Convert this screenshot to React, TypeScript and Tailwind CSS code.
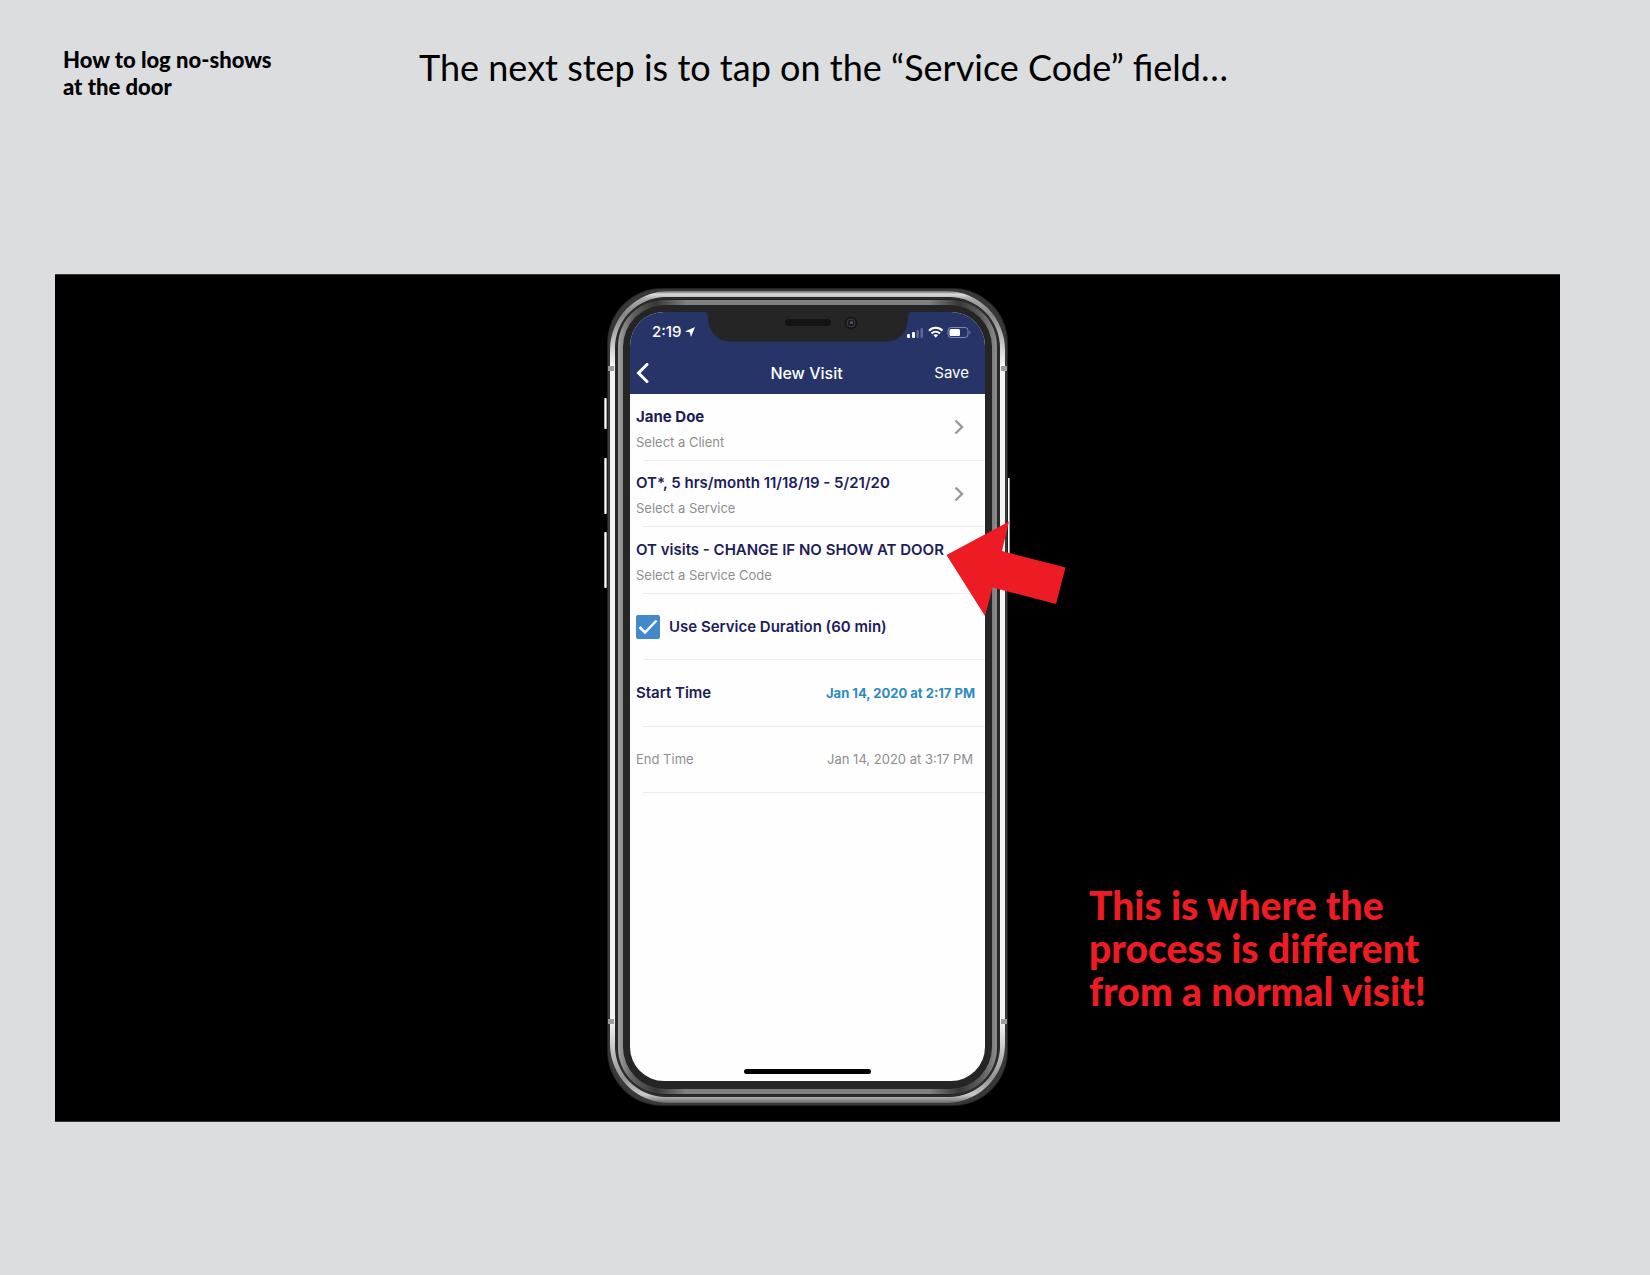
import type { ReactNode } from 'react';

const PhoneFrame = () => (
  <svg className="absolute inset-0 h-full w-full overflow-visible" viewBox="0 0 401 818" preserveAspectRatio="none" aria-hidden="true">
    <defs>
      <linearGradient id="steel" x1="0" y1="0" x2="0" y2="1">
        <stop offset="0" stopColor="#6a6a6a" />
        <stop offset="0.004" stopColor="#dcdcdc" />
        <stop offset="0.01" stopColor="#a8a8a8" />
        <stop offset="0.03" stopColor="#888888" />
        <stop offset="0.09" stopColor="#f4f4f4" />
        <stop offset="0.9" stopColor="#f4f4f4" />
        <stop offset="0.97" stopColor="#949494" />
        <stop offset="0.99" stopColor="#c8c8c8" />
        <stop offset="1" stopColor="#6a6a6a" />
      </linearGradient>
      <linearGradient id="button" x1="0" y1="0" x2="1" y2="0">
        <stop offset="0" stopColor="#8a8a8a" />
        <stop offset="0.5" stopColor="#ffffff" />
        <stop offset="1" stopColor="#777777" />
      </linearGradient>
      <linearGradient id="rim" x1="0" y1="0" x2="1" y2="0">
        <stop offset="0" stopColor="#a0a0a0" />
        <stop offset="0.04" stopColor="#606060" />
        <stop offset="0.1" stopColor="#383838" />
        <stop offset="0.18" stopColor="#808080" />
        <stop offset="0.82" stopColor="#808080" />
        <stop offset="0.9" stopColor="#383838" />
        <stop offset="0.96" stopColor="#606060" />
        <stop offset="1" stopColor="#8c8c8c" />
      </linearGradient>
    </defs>
    <rect x="-3" y="110" width="3" height="31" rx="1" fill="url(#button)" />
    <rect x="-3" y="170" width="3" height="56" rx="1" fill="url(#button)" />
    <rect x="-3" y="244" width="3" height="56" rx="1" fill="url(#button)" />
    <rect x="400" y="190" width="3" height="90" rx="1" fill="url(#button)" />
    <rect x="0" y="0" width="401" height="818" rx="55" fill="#202020" />
    <rect x="1" y="1" width="399" height="816" rx="54" fill="#383838" />
    <rect x="3" y="3" width="395" height="812" rx="59" fill="url(#steel)" />
    <rect x="8" y="9" width="385" height="800" rx="51" fill="#242424" />
    <rect x="9" y="10" width="383" height="798" rx="50" fill="none" stroke="#303030" strokeWidth="1" />
    <rect x="11" y="12" width="379" height="794" rx="46" fill="url(#rim)" />
    <rect x="16" y="17" width="369" height="784" rx="42" fill="#252525" />
    <g fill="#9aa09d">
      <rect x="1" y="78" width="6" height="5" />
      <rect x="394" y="78" width="6" height="5" />
      <rect x="1" y="731" width="6" height="5" />
      <rect x="394" y="731" width="6" height="5" />
    </g>
  </svg>
);

const Notch = () => (
  <svg className="absolute left-1/2 top-0 -translate-x-1/2" width="206" height="30" viewBox="0 0 206 30" aria-hidden="true">
    <path d="M0 0H206C204 0 203 1.500 203 5V8C202 20 194 29.500 182 29.500H25C13 29.500 4 20 3 8V5C3 1.500 2 0 0 0Z" fill="#252525" />
    <rect x="80" y="7" width="46" height="7" rx="3.500" fill="#141414" />
    <circle cx="146" cy="11" r="6.500" fill="#161616" />
    <circle cx="146" cy="11" r="4" fill="#1a1a22" stroke="#3e3e44" strokeWidth="1" />
    <circle cx="146.500" cy="10.500" r="1.500" fill="#50548a" />
  </svg>
);

const StatusIcons = () => (
  <svg width="64" height="14" viewBox="0 0 64 14" aria-hidden="true">
    <rect x="0" y="9" width="3" height="4" rx="1" fill="#fff" />
    <rect x="5" y="7" width="3" height="6" rx="1" fill="#fff" />
    <rect x="9.500" y="5" width="2.500" height="8" rx="1" fill="#5c689a" />
    <rect x="13.500" y="3" width="2.500" height="10" rx="1" fill="#5c689a" />
    <g fill="none" stroke="#fff" strokeWidth="2">
      <path d="M22 5.700C25.500 1.900 32 1.900 35.500 5.700" />
      <path d="M24.500 8.500C27 6 30.500 6 33 8.500" />
    </g>
    <path d="M26.400 10.100C27.800 8.900 29.700 8.900 31.100 10.100L28.750 12.700Z" fill="#fff" />
    <rect x="41" y="2.500" width="20" height="10" rx="3" fill="none" stroke="#7f88b0" />
    <rect x="42.500" y="4" width="10.500" height="7" rx="1.500" fill="#fff" />
    <path d="M62.500 5.700C63.800 6.300 63.800 8.700 62.500 9.300Z" fill="#7f88b0" />
  </svg>
);

const Chevron = () => (
  <svg width="10" height="16" viewBox="0 0 10 16" fill="none" stroke="#999" strokeWidth="2.400" aria-hidden="true">
    <path d="M1.500 1.500L8 8L1.500 14.500" />
  </svg>
);

const Row = ({ children }: { children: ReactNode }) => (
  <li className="relative flex items-center pl-[6px] after:absolute after:bottom-0 after:left-[13px] after:right-0 after:h-px after:bg-[#ececef]">
    {children}
  </li>
);

const fields = [
  { value: 'Jane Doe', hint: 'Select a Client', chevron: true, weight: 'font-bold' },
  { value: 'OT*, 5 hrs/month 11/18/19 - 5/21/20', hint: 'Select a Service', chevron: true, weight: 'font-semibold' },
  { value: 'OT visits - CHANGE IF NO SHOW AT DOOR', hint: 'Select a Service Code', chevron: false, weight: 'font-semibold' }
];

const VisitScreen = () => (
  <div className="relative flex h-[769px] flex-col overflow-hidden rounded-[34px] bg-[#fefefe] font-['Inter',sans-serif] text-[#1c1d59]">
    <header className="h-[82px] shrink-0 bg-[#263467] text-white">
      <Notch />
      <div className="flex h-[40px] items-center justify-between pl-[22px] pr-[14px]">
        <div className="flex items-center gap-1 text-[15px] font-medium">
          <span>2:19</span>
          <svg width="10" height="10" viewBox="0 0 10 10" fill="#fff" aria-hidden="true">
            <path d="M10 0L6 10L4.800 5.300L0 4.400Z" />
          </svg>
        </div>
        <StatusIcons />
      </div>
      <div className="grid h-[42px] grid-cols-3 items-center pl-[6px] pr-[16px]">
        <button type="button" aria-label="Back" className="justify-self-start">
          <svg width="13" height="20" viewBox="0 0 13 20" fill="none" stroke="#fff" strokeWidth="3" strokeLinecap="round" aria-hidden="true">
            <path d="M11 1.500L2.500 10L11 18.500" />
          </svg>
        </button>
        <h2 className="pl-[8px] text-center text-[16px] font-medium">New Visit</h2>
        <button type="button" className="justify-self-end text-[15px]">Save</button>
      </div>
    </header>

    <ul className="grid h-[399px] grid-rows-6">
      {fields.map((field) => (
        <Row key={field.hint}>
          <button type="button" className="flex w-full items-center justify-between pr-[21px] text-left">
            <span className="flex flex-col gap-[5px] pt-[4px]">
              <span className={`whitespace-nowrap text-[15px] leading-[20px] ${field.weight}`}>{field.value}</span>
              <span className="text-[13px] leading-[20px] text-[#8e8e90]">{field.hint}</span>
            </span>
            {field.chevron && <Chevron />}
          </button>
        </Row>
      ))}
      <Row>
        <label className="flex items-center gap-[9px] text-[15px] font-semibold">
          <span className="relative block size-[24px]">
            <input type="checkbox" defaultChecked className="block size-[24px] appearance-none rounded-[2px] bg-[#4289cb]" />
            <svg className="pointer-events-none absolute inset-0" width="24" height="24" viewBox="0 0 24 24" fill="none" stroke="#fff" strokeWidth="2.500" aria-hidden="true">
              <path d="M3.500 12L9 17.500L20.500 5.500" />
            </svg>
          </span>
          Use Service Duration (60 min)
        </label>
      </Row>
      <Row>
        <div className="flex w-full items-center justify-between pr-[10px]">
          <span className="text-[15px] font-semibold">Start Time</span>
          <button type="button" className="text-[13px] font-bold text-[#2d8ac0]">Jan 14, 2020 at 2:17 PM</button>
        </div>
      </Row>
      <Row>
        <div className="flex w-full items-center justify-between pr-[12px] text-[13px] text-[#8e8e90]">
          <span>End Time</span>
          <span>Jan 14, 2020 at 3:17 PM</span>
        </div>
      </Row>
    </ul>
    <div className="mx-auto mb-[7px] mt-auto h-[5px] w-[127px] rounded-full bg-black" />
  </div>
);

const App = () => {
  return (
    <div className="min-h-screen bg-[#dcddde] font-['Lato',sans-serif] text-black">
      <header className="flex h-[274px] items-start pl-[63px] pt-[46px]">
        <p className="w-[356px] text-[22px] font-black leading-[27px]">
          How to log no-shows
          <br />
          at the door
        </p>
        <h1 className="whitespace-nowrap text-[36px] leading-[42px]">The next step is to tap on the “Service Code” field…</h1>
      </header>

      <main className="ml-[55px] mr-[90px] grid grid-cols-[1fr_auto_1fr] border-y border-[#3a3637] bg-black pb-[15px] pt-[13px]">
        <div />
        <div className="relative w-[401px] pb-[25px] pl-[23px] pr-[23px] pt-[24px]">
          <PhoneFrame />
          <VisitScreen />
          <svg className="absolute left-[339px] top-[233px]" width="120" height="95" viewBox="0 0 120 95" aria-hidden="true">
            <path d="M0.500 34L63 0.500L56 30L119.500 46.500L110 83L46.500 66.500L39 95Z" fill="#ed1c24" />
          </svg>
        </div>
        <p className="mb-[93px] self-end whitespace-nowrap pl-[81px] text-[39px] font-black leading-[43px] text-[#ed1c24]">
          This is where the
          <br />
          process is different
          <br />
          from a normal visit!
        </p>
      </main>
    </div>
  );
};

export default App;
